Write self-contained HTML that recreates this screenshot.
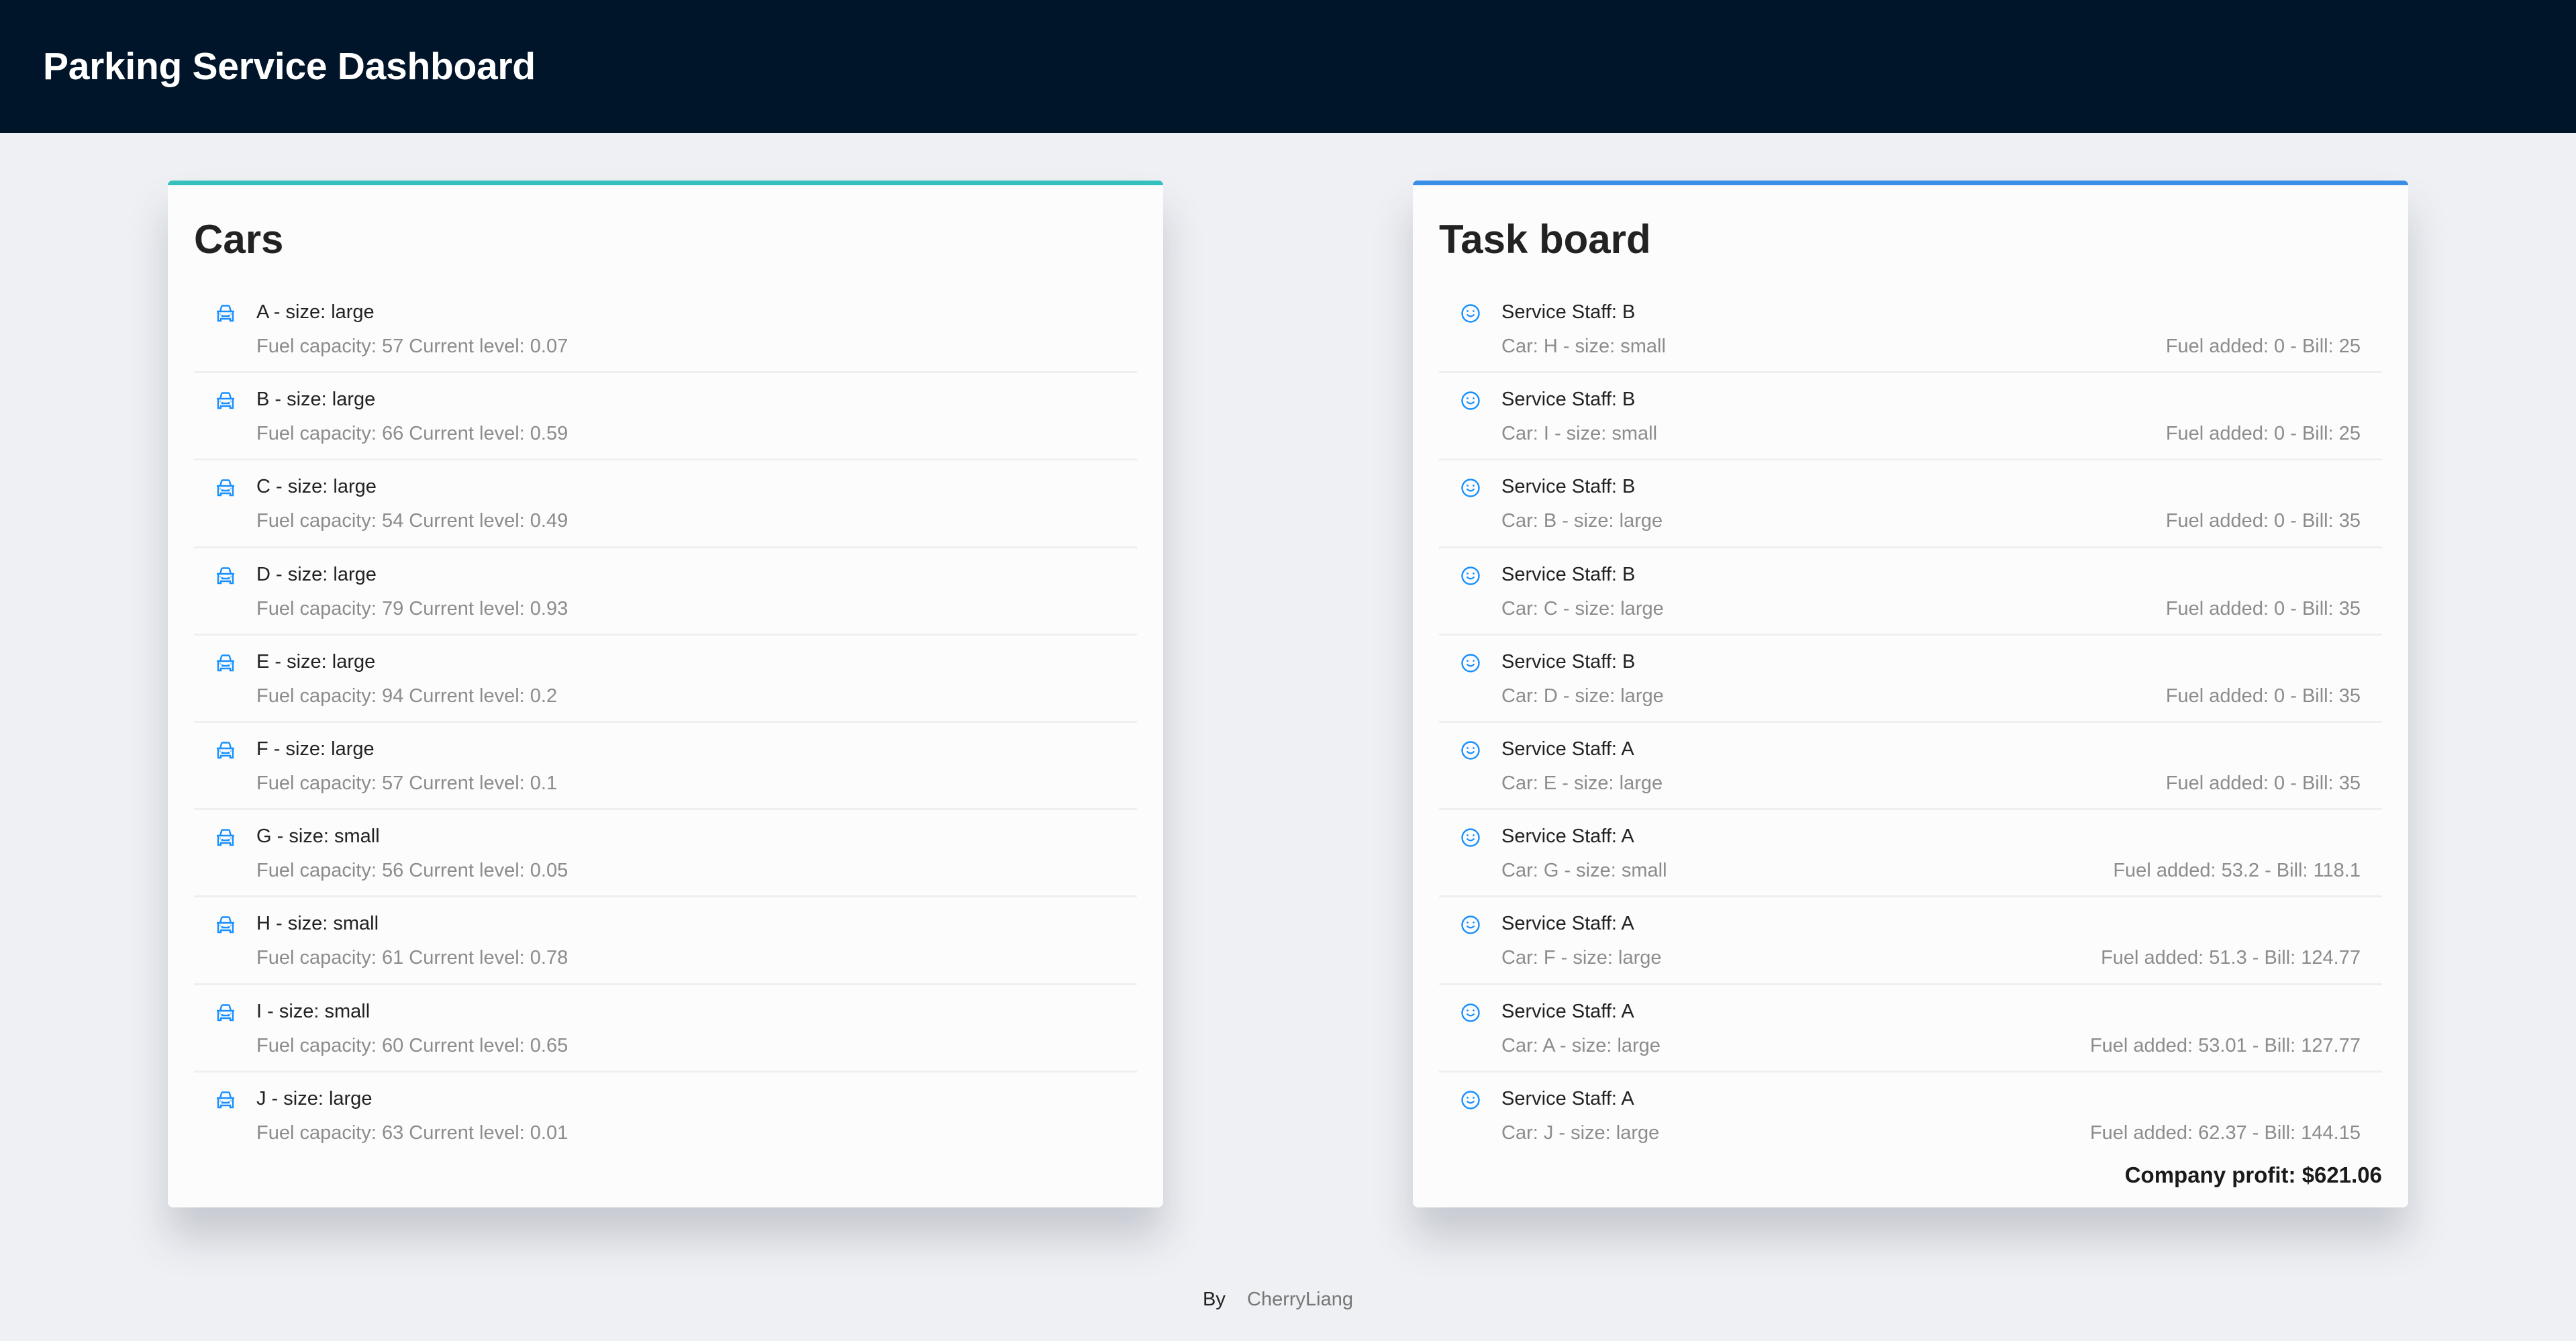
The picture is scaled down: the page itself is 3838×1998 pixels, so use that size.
<!DOCTYPE html>
<html><head><meta charset="utf-8"><style>
*{margin:0;padding:0;box-sizing:border-box}
body{width:3838px;height:1998px;background:#eef0f4;font-family:"Liberation Sans",sans-serif;position:relative;overflow:hidden}
.hdr{position:absolute;left:0;top:0;width:3838px;height:198px;background:#001529}
.hdr h1{position:absolute;left:64px;top:64px;font-size:57px;font-weight:600;color:#fff;line-height:70px;letter-spacing:-0.3px}
.card{position:absolute;top:269px;width:1483px;height:1530px;background:#fcfcfc;border-radius:8px;box-shadow:0 45px 60px rgba(60,64,80,.22)}
.card .bar{position:absolute;left:0;top:0;right:0;height:7px;border-radius:8px 8px 0 0}
.card h2{position:absolute;left:39px;top:53px;font-size:60px;font-weight:600;color:#222;line-height:70px}
.list{position:absolute;left:39px;right:39px;top:157px}
.row{height:130.2px;border-bottom:3px solid #efefef;position:relative}
.row:last-child{border-bottom:none}
.t{position:absolute;left:93px;top:22px;font-size:29px;color:#222;line-height:34px}
.s{position:absolute;left:93px;top:73px;font-size:29px;color:#8c8c8c;line-height:34px}
.r{position:absolute;right:32px;top:73px;font-size:29px;color:#8c8c8c;line-height:34px}
.ic{position:absolute;left:32px;top:28px}
.prof{position:absolute;right:39px;top:1463px;font-size:33px;font-weight:700;color:#1a1a1a}
.ft{position:absolute;top:1919px;font-size:29px;line-height:34px}
</style></head><body>
<div class="hdr"><h1>Parking Service Dashboard</h1></div>

<div class="card" style="left:250px"><div class="bar" style="background:#36c0bd"></div><h2>Cars</h2>
<div class="list">
<div class="row"><svg class="ic" width="30" height="26" viewBox="0 0 30 26"><path d="M7 10 L9 3 Q9.5 1.5 11 1.5 H19 Q20.5 1.5 21 3 L23 10 M2 10 H28 M4 10 V24 H8 V21 H22 V24 H26 V10 M10 15 V17 H20 V15 M6.5 14 h1 M22.5 14 h1" fill="none" stroke="#1890ff" stroke-width="2.4"/></svg><div class="t">A - size: large</div><div class="s">Fuel capacity: 57 Current level: 0.07</div></div>
<div class="row"><svg class="ic" width="30" height="26" viewBox="0 0 30 26"><path d="M7 10 L9 3 Q9.5 1.5 11 1.5 H19 Q20.5 1.5 21 3 L23 10 M2 10 H28 M4 10 V24 H8 V21 H22 V24 H26 V10 M10 15 V17 H20 V15 M6.5 14 h1 M22.5 14 h1" fill="none" stroke="#1890ff" stroke-width="2.4"/></svg><div class="t">B - size: large</div><div class="s">Fuel capacity: 66 Current level: 0.59</div></div>
<div class="row"><svg class="ic" width="30" height="26" viewBox="0 0 30 26"><path d="M7 10 L9 3 Q9.5 1.5 11 1.5 H19 Q20.5 1.5 21 3 L23 10 M2 10 H28 M4 10 V24 H8 V21 H22 V24 H26 V10 M10 15 V17 H20 V15 M6.5 14 h1 M22.5 14 h1" fill="none" stroke="#1890ff" stroke-width="2.4"/></svg><div class="t">C - size: large</div><div class="s">Fuel capacity: 54 Current level: 0.49</div></div>
<div class="row"><svg class="ic" width="30" height="26" viewBox="0 0 30 26"><path d="M7 10 L9 3 Q9.5 1.5 11 1.5 H19 Q20.5 1.5 21 3 L23 10 M2 10 H28 M4 10 V24 H8 V21 H22 V24 H26 V10 M10 15 V17 H20 V15 M6.5 14 h1 M22.5 14 h1" fill="none" stroke="#1890ff" stroke-width="2.4"/></svg><div class="t">D - size: large</div><div class="s">Fuel capacity: 79 Current level: 0.93</div></div>
<div class="row"><svg class="ic" width="30" height="26" viewBox="0 0 30 26"><path d="M7 10 L9 3 Q9.5 1.5 11 1.5 H19 Q20.5 1.5 21 3 L23 10 M2 10 H28 M4 10 V24 H8 V21 H22 V24 H26 V10 M10 15 V17 H20 V15 M6.5 14 h1 M22.5 14 h1" fill="none" stroke="#1890ff" stroke-width="2.4"/></svg><div class="t">E - size: large</div><div class="s">Fuel capacity: 94 Current level: 0.2</div></div>
<div class="row"><svg class="ic" width="30" height="26" viewBox="0 0 30 26"><path d="M7 10 L9 3 Q9.5 1.5 11 1.5 H19 Q20.5 1.5 21 3 L23 10 M2 10 H28 M4 10 V24 H8 V21 H22 V24 H26 V10 M10 15 V17 H20 V15 M6.5 14 h1 M22.5 14 h1" fill="none" stroke="#1890ff" stroke-width="2.4"/></svg><div class="t">F - size: large</div><div class="s">Fuel capacity: 57 Current level: 0.1</div></div>
<div class="row"><svg class="ic" width="30" height="26" viewBox="0 0 30 26"><path d="M7 10 L9 3 Q9.5 1.5 11 1.5 H19 Q20.5 1.5 21 3 L23 10 M2 10 H28 M4 10 V24 H8 V21 H22 V24 H26 V10 M10 15 V17 H20 V15 M6.5 14 h1 M22.5 14 h1" fill="none" stroke="#1890ff" stroke-width="2.4"/></svg><div class="t">G - size: small</div><div class="s">Fuel capacity: 56 Current level: 0.05</div></div>
<div class="row"><svg class="ic" width="30" height="26" viewBox="0 0 30 26"><path d="M7 10 L9 3 Q9.5 1.5 11 1.5 H19 Q20.5 1.5 21 3 L23 10 M2 10 H28 M4 10 V24 H8 V21 H22 V24 H26 V10 M10 15 V17 H20 V15 M6.5 14 h1 M22.5 14 h1" fill="none" stroke="#1890ff" stroke-width="2.4"/></svg><div class="t">H - size: small</div><div class="s">Fuel capacity: 61 Current level: 0.78</div></div>
<div class="row"><svg class="ic" width="30" height="26" viewBox="0 0 30 26"><path d="M7 10 L9 3 Q9.5 1.5 11 1.5 H19 Q20.5 1.5 21 3 L23 10 M2 10 H28 M4 10 V24 H8 V21 H22 V24 H26 V10 M10 15 V17 H20 V15 M6.5 14 h1 M22.5 14 h1" fill="none" stroke="#1890ff" stroke-width="2.4"/></svg><div class="t">I - size: small</div><div class="s">Fuel capacity: 60 Current level: 0.65</div></div>
<div class="row"><svg class="ic" width="30" height="26" viewBox="0 0 30 26"><path d="M7 10 L9 3 Q9.5 1.5 11 1.5 H19 Q20.5 1.5 21 3 L23 10 M2 10 H28 M4 10 V24 H8 V21 H22 V24 H26 V10 M10 15 V17 H20 V15 M6.5 14 h1 M22.5 14 h1" fill="none" stroke="#1890ff" stroke-width="2.4"/></svg><div class="t">J - size: large</div><div class="s">Fuel capacity: 63 Current level: 0.01</div></div>
</div></div>

<div class="card" style="left:2105px"><div class="bar" style="background:#3a8ee6"></div><h2>Task board</h2>
<div class="list">
<div class="row"><svg class="ic" width="30" height="30" viewBox="0 0 30 30" style="top:26px"><circle cx="15" cy="15" r="12.5" fill="none" stroke="#1890ff" stroke-width="2.4"/><path d="M9.5 16.5 Q15 22 20.5 16.5" fill="none" stroke="#1890ff" stroke-width="2.2"/><circle cx="10.5" cy="11.5" r="1.4" fill="#1890ff"/><circle cx="19.5" cy="11.5" r="1.4" fill="#1890ff"/></svg><div class="t">Service Staff: B</div><div class="s">Car: H - size: small</div><div class="r">Fuel added: 0 - Bill: 25</div></div>
<div class="row"><svg class="ic" width="30" height="30" viewBox="0 0 30 30" style="top:26px"><circle cx="15" cy="15" r="12.5" fill="none" stroke="#1890ff" stroke-width="2.4"/><path d="M9.5 16.5 Q15 22 20.5 16.5" fill="none" stroke="#1890ff" stroke-width="2.2"/><circle cx="10.5" cy="11.5" r="1.4" fill="#1890ff"/><circle cx="19.5" cy="11.5" r="1.4" fill="#1890ff"/></svg><div class="t">Service Staff: B</div><div class="s">Car: I - size: small</div><div class="r">Fuel added: 0 - Bill: 25</div></div>
<div class="row"><svg class="ic" width="30" height="30" viewBox="0 0 30 30" style="top:26px"><circle cx="15" cy="15" r="12.5" fill="none" stroke="#1890ff" stroke-width="2.4"/><path d="M9.5 16.5 Q15 22 20.5 16.5" fill="none" stroke="#1890ff" stroke-width="2.2"/><circle cx="10.5" cy="11.5" r="1.4" fill="#1890ff"/><circle cx="19.5" cy="11.5" r="1.4" fill="#1890ff"/></svg><div class="t">Service Staff: B</div><div class="s">Car: B - size: large</div><div class="r">Fuel added: 0 - Bill: 35</div></div>
<div class="row"><svg class="ic" width="30" height="30" viewBox="0 0 30 30" style="top:26px"><circle cx="15" cy="15" r="12.5" fill="none" stroke="#1890ff" stroke-width="2.4"/><path d="M9.5 16.5 Q15 22 20.5 16.5" fill="none" stroke="#1890ff" stroke-width="2.2"/><circle cx="10.5" cy="11.5" r="1.4" fill="#1890ff"/><circle cx="19.5" cy="11.5" r="1.4" fill="#1890ff"/></svg><div class="t">Service Staff: B</div><div class="s">Car: C - size: large</div><div class="r">Fuel added: 0 - Bill: 35</div></div>
<div class="row"><svg class="ic" width="30" height="30" viewBox="0 0 30 30" style="top:26px"><circle cx="15" cy="15" r="12.5" fill="none" stroke="#1890ff" stroke-width="2.4"/><path d="M9.5 16.5 Q15 22 20.5 16.5" fill="none" stroke="#1890ff" stroke-width="2.2"/><circle cx="10.5" cy="11.5" r="1.4" fill="#1890ff"/><circle cx="19.5" cy="11.5" r="1.4" fill="#1890ff"/></svg><div class="t">Service Staff: B</div><div class="s">Car: D - size: large</div><div class="r">Fuel added: 0 - Bill: 35</div></div>
<div class="row"><svg class="ic" width="30" height="30" viewBox="0 0 30 30" style="top:26px"><circle cx="15" cy="15" r="12.5" fill="none" stroke="#1890ff" stroke-width="2.4"/><path d="M9.5 16.5 Q15 22 20.5 16.5" fill="none" stroke="#1890ff" stroke-width="2.2"/><circle cx="10.5" cy="11.5" r="1.4" fill="#1890ff"/><circle cx="19.5" cy="11.5" r="1.4" fill="#1890ff"/></svg><div class="t">Service Staff: A</div><div class="s">Car: E - size: large</div><div class="r">Fuel added: 0 - Bill: 35</div></div>
<div class="row"><svg class="ic" width="30" height="30" viewBox="0 0 30 30" style="top:26px"><circle cx="15" cy="15" r="12.5" fill="none" stroke="#1890ff" stroke-width="2.4"/><path d="M9.5 16.5 Q15 22 20.5 16.5" fill="none" stroke="#1890ff" stroke-width="2.2"/><circle cx="10.5" cy="11.5" r="1.4" fill="#1890ff"/><circle cx="19.5" cy="11.5" r="1.4" fill="#1890ff"/></svg><div class="t">Service Staff: A</div><div class="s">Car: G - size: small</div><div class="r">Fuel added: 53.2 - Bill: 118.1</div></div>
<div class="row"><svg class="ic" width="30" height="30" viewBox="0 0 30 30" style="top:26px"><circle cx="15" cy="15" r="12.5" fill="none" stroke="#1890ff" stroke-width="2.4"/><path d="M9.5 16.5 Q15 22 20.5 16.5" fill="none" stroke="#1890ff" stroke-width="2.2"/><circle cx="10.5" cy="11.5" r="1.4" fill="#1890ff"/><circle cx="19.5" cy="11.5" r="1.4" fill="#1890ff"/></svg><div class="t">Service Staff: A</div><div class="s">Car: F - size: large</div><div class="r">Fuel added: 51.3 - Bill: 124.77</div></div>
<div class="row"><svg class="ic" width="30" height="30" viewBox="0 0 30 30" style="top:26px"><circle cx="15" cy="15" r="12.5" fill="none" stroke="#1890ff" stroke-width="2.4"/><path d="M9.5 16.5 Q15 22 20.5 16.5" fill="none" stroke="#1890ff" stroke-width="2.2"/><circle cx="10.5" cy="11.5" r="1.4" fill="#1890ff"/><circle cx="19.5" cy="11.5" r="1.4" fill="#1890ff"/></svg><div class="t">Service Staff: A</div><div class="s">Car: A - size: large</div><div class="r">Fuel added: 53.01 - Bill: 127.77</div></div>
<div class="row"><svg class="ic" width="30" height="30" viewBox="0 0 30 30" style="top:26px"><circle cx="15" cy="15" r="12.5" fill="none" stroke="#1890ff" stroke-width="2.4"/><path d="M9.5 16.5 Q15 22 20.5 16.5" fill="none" stroke="#1890ff" stroke-width="2.2"/><circle cx="10.5" cy="11.5" r="1.4" fill="#1890ff"/><circle cx="19.5" cy="11.5" r="1.4" fill="#1890ff"/></svg><div class="t">Service Staff: A</div><div class="s">Car: J - size: large</div><div class="r">Fuel added: 62.37 - Bill: 144.15</div></div>
</div>
<div class="prof">Company profit: $621.06</div>
</div>

<div class="ft" style="left:1792px;color:#222">By</div>
<div class="ft" style="left:1858px;color:#777">CherryLiang</div>
</body></html>
